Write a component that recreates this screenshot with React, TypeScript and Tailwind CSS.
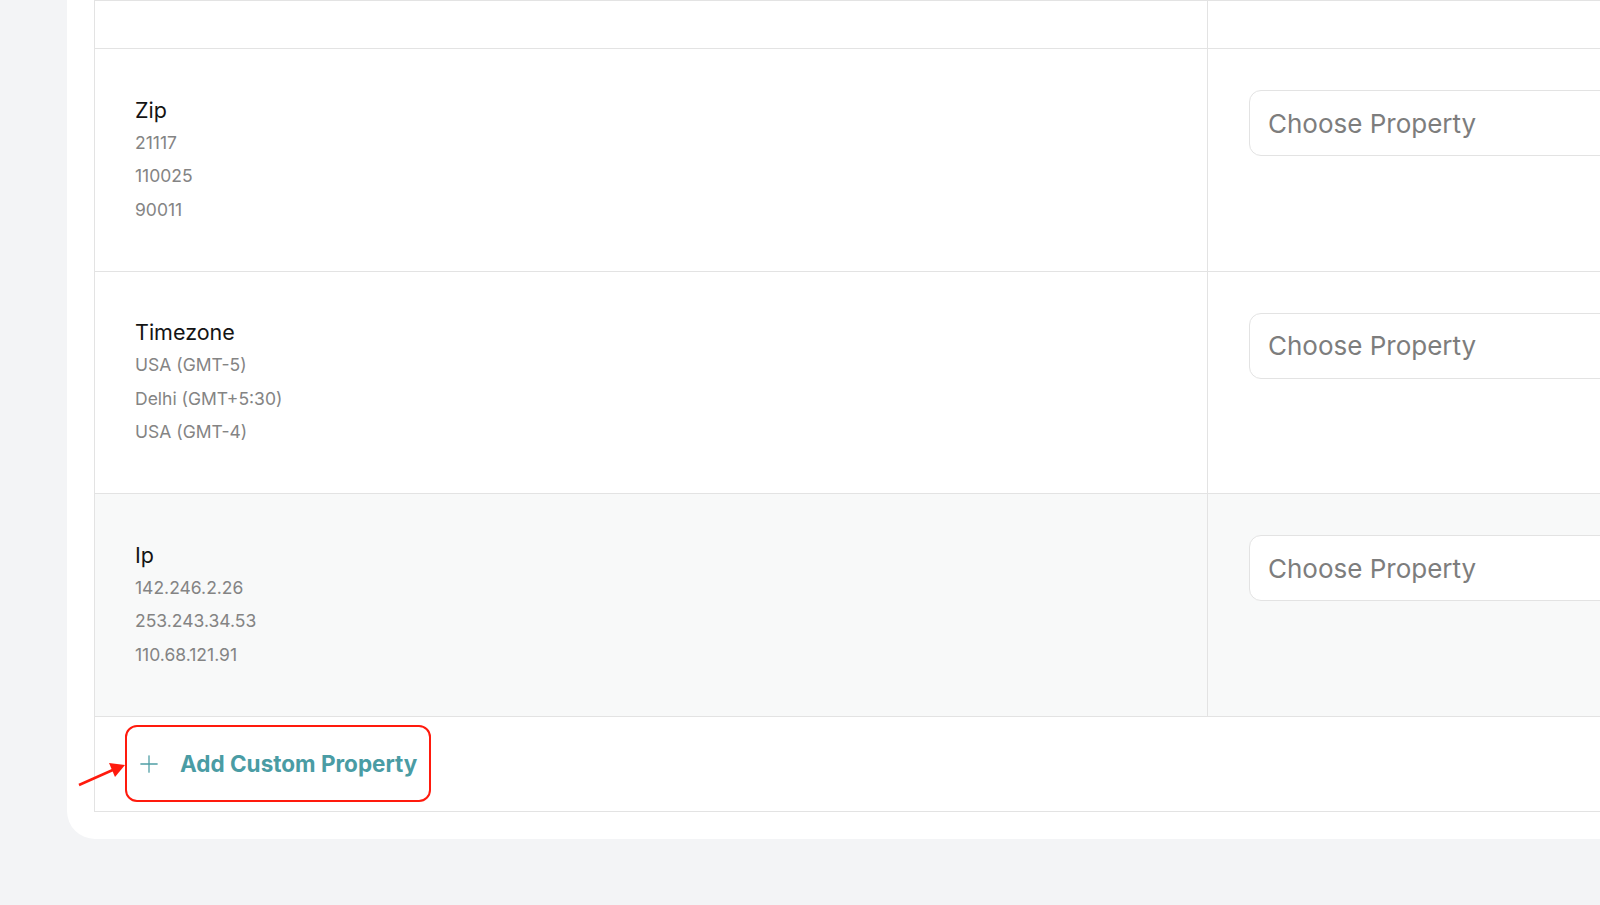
import { Plus } from 'lucide-react';

interface MappingRow {
  label: string;
  samples: string[];
  shaded?: boolean;
}

const rows: MappingRow[] = [
  { label: 'Zip', samples: ['21117', '110025', '90011'] },
  { label: 'Timezone', samples: ['USA (GMT-5)', 'Delhi (GMT+5:30)', 'USA (GMT-4)'] },
  { label: 'Ip', samples: ['142.246.2.26', '253.243.34.53', '110.68.121.91'], shaded: true },
];

function PropertySelect() {
  return (
    <div className="h-[66px] w-[420px] rounded-xl border border-[#e3e3e3] bg-white flex items-center pl-[18px] text-[26px] text-[#7d7d7d]">
      Choose Property
    </div>
  );
}

export default function App() {
  return (
    <div
      className="w-[1600px] h-[905px] overflow-hidden bg-[#f3f4f6]"
      style={{ fontFamily: 'Inter, "Noto Sans", sans-serif' }}
    >
      <div className="ml-[67px] w-[1600px] bg-white rounded-bl-[28px] px-[27px] pb-[27px]">
        <div className="border-l border-b border-[#e3e3e3]">
          {/* tail of the previous row */}
          <div className="flex h-[48px] border-t border-[#e3e3e3]">
            <div className="w-[1113px] shrink-0 border-r border-[#e3e3e3]" />
            <div className="flex-1" />
          </div>

          {rows.map((row) => (
            <div
              key={row.label}
              className={`flex h-[222.5px] border-t border-[#e3e3e3] ${row.shaded ? 'bg-[#f8f9f9]' : 'bg-white'}`}
            >
              <div className="w-[1113px] shrink-0 border-r border-[#e3e3e3] pl-[40px] pt-[46.5px]">
                <div className="text-[21.5px] leading-[28px] text-[#141414]">{row.label}</div>
                <div className="mt-[2px] flex flex-col">
                  {row.samples.map((s) => (
                    <div key={s} className="text-[17.5px] leading-[33.5px] text-[#848484]">
                      {s}
                    </div>
                  ))}
                </div>
              </div>
              <div className="flex-1 pl-[41px] pt-[41px]">
                <PropertySelect />
              </div>
            </div>
          ))}

          {/* footer with the highlighted action */}
          <div className="relative flex h-[95px] items-center border-t border-[#e3e3e3] pl-[30px]">
            <button className="flex h-[77px] w-[306px] items-center gap-[17px] rounded-xl border-2 border-[#ff1a0d] pl-[8px]">
              <Plus className="h-[28px] w-[28px] text-[#4f9ea5]" strokeWidth={1.1} />
              <span className="text-[22.5px] font-bold text-[#4a9ca4]">Add Custom Property</span>
            </button>
            <svg
              className="absolute left-[-20px] top-[42px] h-[32px] w-[56px]"
              viewBox="0 0 56 32"
            >
              <line x1="4" y1="26" x2="40" y2="10" stroke="#ff1a0d" strokeWidth="2.5" />
              <polygon points="50,6 34,4 40,18" fill="#ff1a0d" />
            </svg>
          </div>
        </div>
      </div>
    </div>
  );
}
